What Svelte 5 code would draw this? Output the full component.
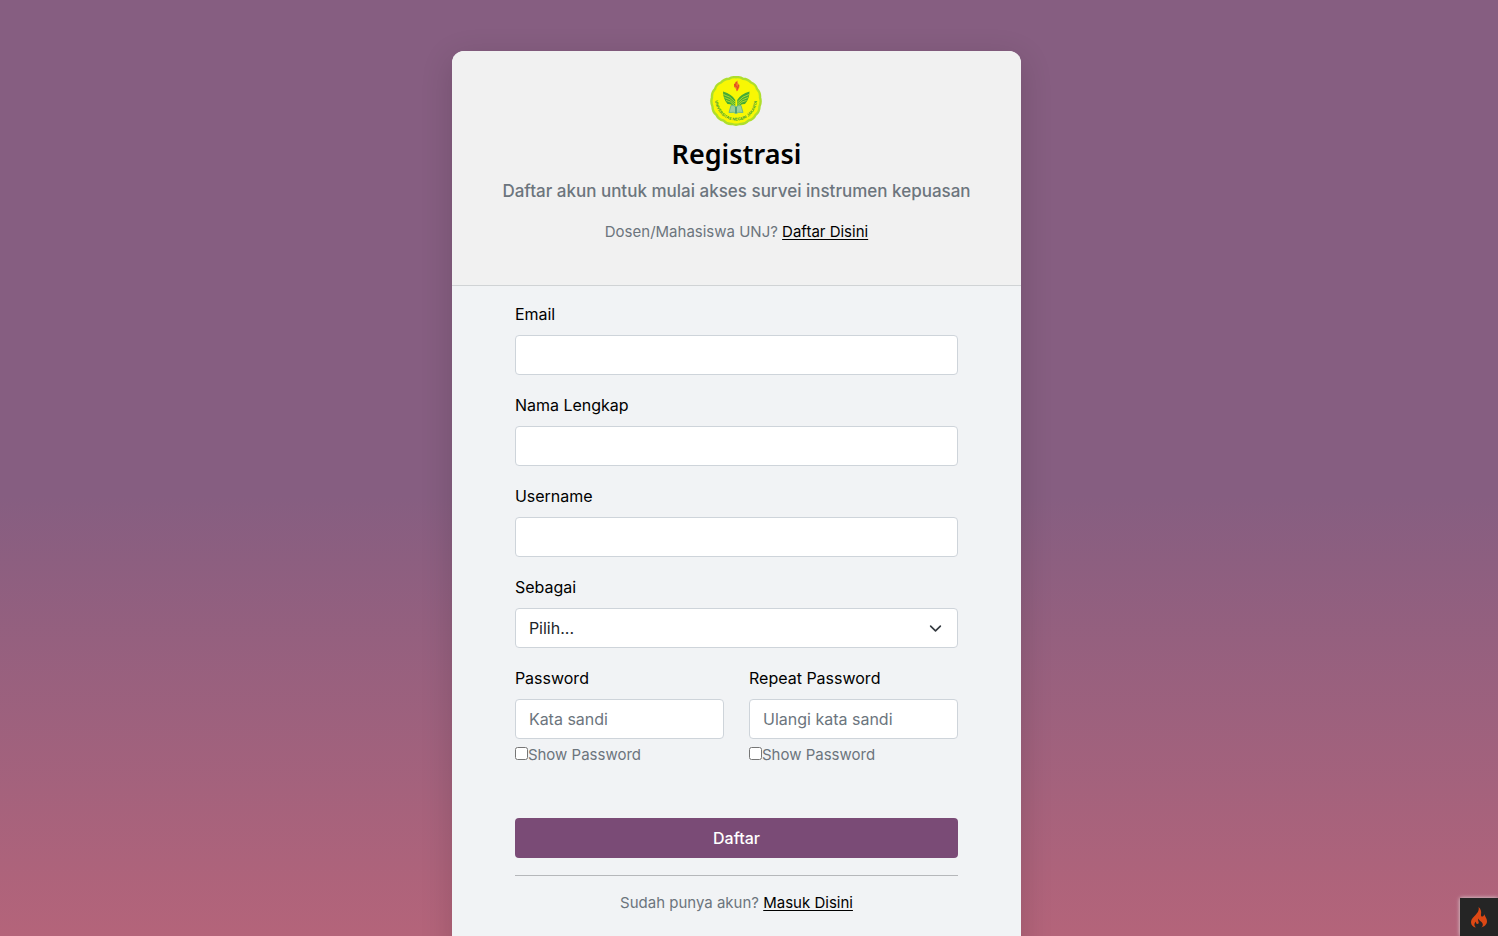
<script>
  let showPassword = $state(false);
  let showRepeat = $state(false);
</script>

<svelte:head><title>Registrasi</title></svelte:head>

<main>
  <section class="card">
    <header>
      <svg class="logo" viewBox="0 0 52 50" role="img" aria-label="Universitas Negeri Jakarta">
        <path d="M26 1.200Q30 .8 33 2.800Q38 3 41 6.500Q46 8.500 47 13Q50.500 16.500 50 21.500Q51.500 26 49.500 30.500Q49.500 36 45.500 39Q43.500 43.500 38.500 44.500Q35 48.500 30 48Q26 49.500 22 48Q17 48.500 13.500 44.500Q8.500 43.500 6.500 39Q2.500 36 2.500 30.500Q.5 26 2 21.500Q1.500 16.500 5 13Q6 8.500 11 6.500Q14 3 19 2.800Q22 .8 26 1.200Z" fill="#f8f704" stroke="#aede2c" stroke-width="2.400" />
        <path d="M27.500 4.500Q27 7 29.500 9Q30 12 26.800 15.500Q27 13 24.500 11.500Q22.500 8 27.500 4.500Z" fill="#f0802a" />
        <path d="M26.500 6L25.500 9L27.500 12L26.800 14.500M24.500 8L25 11M28.500 9L28 12" fill="none" stroke="#e2521f" stroke-width="1.200" />
        <path d="M13 15.500Q22 18 25.300 24V32Q23 28 17.500 28Q13 23 13 15.500ZM39.500 15.500Q30.500 18 27.200 24V32Q29.500 28 35 28Q39.500 23 39.500 15.500Z" fill="#45ab35" />
        <path d="M13.500 18.500Q20 20 25 26M14.500 21.500Q20 22.500 25 28M16 24.500Q21 25 25 30M39 18.500Q32.500 20 27.500 26M38 21.500Q32.500 22.500 27.500 28M36.500 24.500Q31.500 25 27.500 30" fill="none" stroke="#b9e02c" stroke-width=".9" />
        <path d="M21 29.500Q24 29 26 31Q28 29 31 29.500L33 36.500Q28 35.500 26 37.500Q24 35.500 19 36.500Z" fill="#9ccf9b" stroke="#6cbb87" stroke-width="1" />
        <path d="M26 31V37" stroke="#2f8f70" stroke-width="1.400" />
        <path id="motto" d="M5 19.500C4 35 14 44.500 26 44.500S48 35 47 19.500" fill="none" />
        <text class="motto"><textPath href="#motto" startOffset="50%" text-anchor="middle">UNIVERSITAS NEGERI JAKARTA</textPath></text>
      </svg>
      <h1>Registrasi</h1>
      <p class="lead">Daftar akun untuk mulai akses survei instrumen kepuasan</p>
      <p class="small">Dosen/Mahasiswa UNJ? <a href="#daftar">Daftar Disini</a></p>
    </header>

    <form onsubmit={(e) => e.preventDefault()}>
      <div class="field">
        <label for="email">Email</label>
        <input class="control" id="email" type="email" />
      </div>
      <div class="field">
        <label for="nama">Nama Lengkap</label>
        <input class="control" id="nama" type="text" />
      </div>
      <div class="field">
        <label for="username">Username</label>
        <input class="control" id="username" type="text" />
      </div>
      <div class="field">
        <label for="sebagai">Sebagai</label>
        <div class="select">
          <select class="control" id="sebagai"><option>Pilih...</option></select>
          <svg viewBox="0 0 16 16" aria-hidden="true"><path d="M2 5l6 6 6-6" fill="none" stroke="#343a40" stroke-width="2" stroke-linecap="round" stroke-linejoin="round" /></svg>
        </div>
      </div>
      <div class="pair">
        <div class="field">
          <label for="password">Password</label>
          <input class="control" id="password" type={showPassword ? 'text' : 'password'} placeholder="Kata sandi" />
          <label class="check"><input type="checkbox" bind:checked={showPassword} />Show Password</label>
        </div>
        <div class="field">
          <label for="repeat">Repeat Password</label>
          <input class="control" id="repeat" type={showRepeat ? 'text' : 'password'} placeholder="Ulangi kata sandi" />
          <label class="check"><input type="checkbox" bind:checked={showRepeat} />Show Password</label>
        </div>
      </div>
      <button class="submit" type="submit">Daftar</button>
      <hr />
      <p class="small">Sudah punya akun? <a href="#masuk">Masuk Disini</a></p>
    </form>
  </section>
</main>

<button class="debug" type="button" aria-label="Debug toolbar">
  <svg viewBox="0 0 16 21" aria-hidden="true">
    <path d="M7.500 0C8.500 3.500 6.500 6 3.500 9C1 11.500 0 13 0 15.200C0 18 2 20 5 20.500C3.500 19.300 3 17.800 3.700 16.200C4 15.500 4.600 15 5 14.500C4.800 16 5.300 17 6.300 17C7.800 17 8 15.700 7.500 14.500C7 13.300 7 12.500 7.700 11.500C8 13.300 9.200 13.800 10.500 15C12.500 17 12 19.300 10.300 20.500C13.500 19.500 16 17.500 16 14.300C16 11.500 14.200 9.800 13.200 7.300C13 8.500 12.600 9.300 11.500 9.500C10.300 9.700 9.800 8.800 10 7.500C10.500 4.500 10 2 7.500 0Z" fill="#dd4814" />
  </svg>
</button>

<style>
  :global(body) {
    min-height: 100vh;
    background: linear-gradient(#865e81 0%, #865e81 53%, #b4647a 100%) fixed;
    font-family: Inter, "Open Sans", sans-serif;
    font-size: 16px;
    line-height: 24px;
    color: #000;
  }
  main {
    display: flex;
    justify-content: center;
    padding: 51px 25px 48px 0;
  }
  .card {
    width: 38vw;
    min-width: 320px;
    border-radius: 12px;
    background: #f1f3f5;
    box-shadow: 0 8px 32px rgba(0, 0, 0, 0.15);
  }
  header {
    display: flex;
    flex-direction: column;
    align-items: center;
    padding: 25px 24px 41px;
    border-bottom: 1px solid #d0d3d5;
    border-radius: 12px 12px 0 0;
    background: #f1f1f1;
    text-align: center;
  }
  .logo { width: 52px; height: 50px; }
  .motto { font: 700 4px "Liberation Sans", sans-serif; fill: #3a9d3c; }
  h1 {
    margin: 10px 0 0;
    font: 600 27px/36px "Noto Sans", sans-serif;
  }
  p { margin: 0; }
  .lead {
    margin: 7px 0 17px;
    font-size: 17px;
    font-weight: 500;
    color: #6c757d;
  }
  .small { font-size: 15px; color: #6c757d; text-align: center; }
  a { color: #000; text-decoration-thickness: 1px; text-underline-offset: 2px; }
  form { padding: 16px 63px 48px; }
  .field {
    display: flex;
    flex-direction: column;
    gap: 9px;
    margin-bottom: 18px;
  }
  .control {
    box-sizing: border-box;
    width: 100%;
    height: 40px;
    padding: 0 13px;
    border: 1px solid #ced4da;
    border-radius: 4px;
    background: #fff;
    color: #212529;
    font: inherit;
  }
  .control::placeholder { color: #6c757d; opacity: 1; }
  .select { display: grid; }
  .select > * { grid-area: 1 / 1; }
  .select select { appearance: none; }
  .select svg {
    width: 13px;
    height: 13px;
    margin-right: 16px;
    align-self: center;
    justify-self: end;
    pointer-events: none;
  }
  .pair {
    display: grid;
    grid-template-columns: 1fr 1fr;
    gap: 25px;
  }
  .pair .field { margin-bottom: 51px; }
  .check {
    display: flex;
    align-items: center;
    margin-top: -5px;
    font-size: 15px;
    color: #6c757d;
  }
  .check input { width: 13px; height: 13px; margin: 0 0 4px; }
  .submit {
    width: 100%;
    height: 40px;
    padding: 0;
    border: 0;
    border-radius: 4px;
    background: #7a4b76;
    color: #fff;
    font: inherit;
    font-weight: 500;
  }
  hr {
    margin: 17px 0 15px;
    border: 0;
    border-top: 1px solid #b5b7ba;
  }
  .debug {
    position: fixed;
    right: 0;
    bottom: 0;
    display: grid;
    place-items: center;
    width: 38px;
    height: 38px;
    padding: 0;
    border: 0;
    background: #252525;
    box-shadow: 0 0 4px #dfdfdf;
  }
  .debug svg { width: 16px; height: 21px; }
</style>
